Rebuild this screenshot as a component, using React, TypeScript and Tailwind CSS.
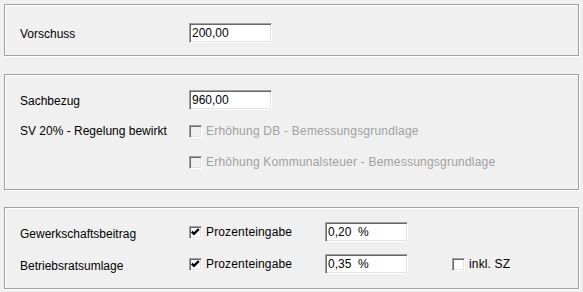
import type { ReactNode } from "react";

function Panel({ className, children }: { className: string; children: ReactNode }) {
	return (
		<div
			className={`w-[575px] border border-[#a0a0a0] shadow-[inset_1px_1px_0_#fff,1px_1px_0_#fff] pl-[15px] ${className}`}
		>
			{children}
		</div>
	);
}

function TextBox({ value }: { value: string }) {
	return (
		<div className="w-[83px] h-[20px] bg-white border border-t-[#a0a0a0] border-l-[#a0a0a0] border-b-white border-r-white shadow-[inset_1px_1px_0_#696969,inset_-1px_-1px_0_#e3e3e3] pl-[2px] flex items-center text-black leading-none whitespace-pre">
			{value}
		</div>
	);
}

function CheckBox({
	checked = false,
	disabled = false,
	label,
}: {
	checked?: boolean;
	disabled?: boolean;
	label: string;
}) {
	return (
		<div className="flex items-center gap-[4px]">
			<div
				className={`w-[13px] h-[13px] border border-t-[#a0a0a0] border-l-[#a0a0a0] border-b-white border-r-white shadow-[inset_1px_1px_0_#696969,inset_-1px_-1px_0_#e3e3e3] ${
					disabled ? "bg-[#f0f0f0]" : "bg-white"
				}`}
			>
				{checked && (
					<svg width="11" height="11" viewBox="0 0 11 11" className="block">
						<path d="M1.8 4.6 L4 6.8 L8.8 2" fill="none" stroke="#000" strokeWidth="2.4" />
					</svg>
				)}
			</div>
			<span
				className={
					disabled
						? "text-[#a0a0a0] tracking-[0.22px]"
						: "text-black tracking-[0.15px]"
				}
			>
				{label}
			</span>
		</div>
	);
}

export default function App() {
	return (
		<div className="w-[583px] h-[292px] bg-[#f0f0f0] pt-[4px] pl-[4px] text-[12px] font-['Liberation_Sans',Arial,sans-serif] text-black overflow-hidden">
			{/* Vorschuss */}
			<Panel className="h-[52px] pt-[18px]">
				<div className="flex items-center h-[20px]">
					<span className="w-[169px] pt-[1px]">Vorschuss</span>
					<TextBox value="200,00" />
				</div>
			</Panel>

			{/* Sachbezug */}
			<Panel className="h-[116px] mt-[18px] pt-[15px]">
				<div className="flex flex-col gap-[11px]">
					<div className="flex items-center h-[20px]">
						<span className="w-[169px] pt-[2px]">Sachbezug</span>
						<TextBox value="960,00" />
					</div>
					<div className="flex items-center h-[20px]">
						<span className="w-[169px]">SV 20% - Regelung bewirkt</span>
						<CheckBox disabled label="Erhöhung DB - Bemessungsgrundlage" />
					</div>
					<div className="flex items-center h-[20px] pl-[169px]">
						<CheckBox disabled label="Erhöhung Kommunalsteuer - Bemessungsgrundlage" />
					</div>
				</div>
			</Panel>

			{/* Gewerkschaft / Betriebsrat */}
			<Panel className="h-[82px] mt-[17px] pt-[14px]">
				<div className="flex flex-col gap-[12px]">
					<div className="flex items-center h-[20px]">
						<span className="w-[169px] pt-[3px]">Gewerkschaftsbeitrag</span>
						<div className="w-[136px]">
							<CheckBox checked label="Prozenteingabe" />
						</div>
						<TextBox value="0,20  %" />
					</div>
					<div className="flex items-center h-[20px]">
						<span className="w-[169px] pt-[3px]">Betriebsratsumlage</span>
						<div className="w-[136px]">
							<CheckBox checked label="Prozenteingabe" />
						</div>
						<TextBox value="0,35  %" />
						<div className="ml-[44px]">
							<CheckBox label="inkl. SZ" />
						</div>
					</div>
				</div>
			</Panel>
		</div>
	);
}
